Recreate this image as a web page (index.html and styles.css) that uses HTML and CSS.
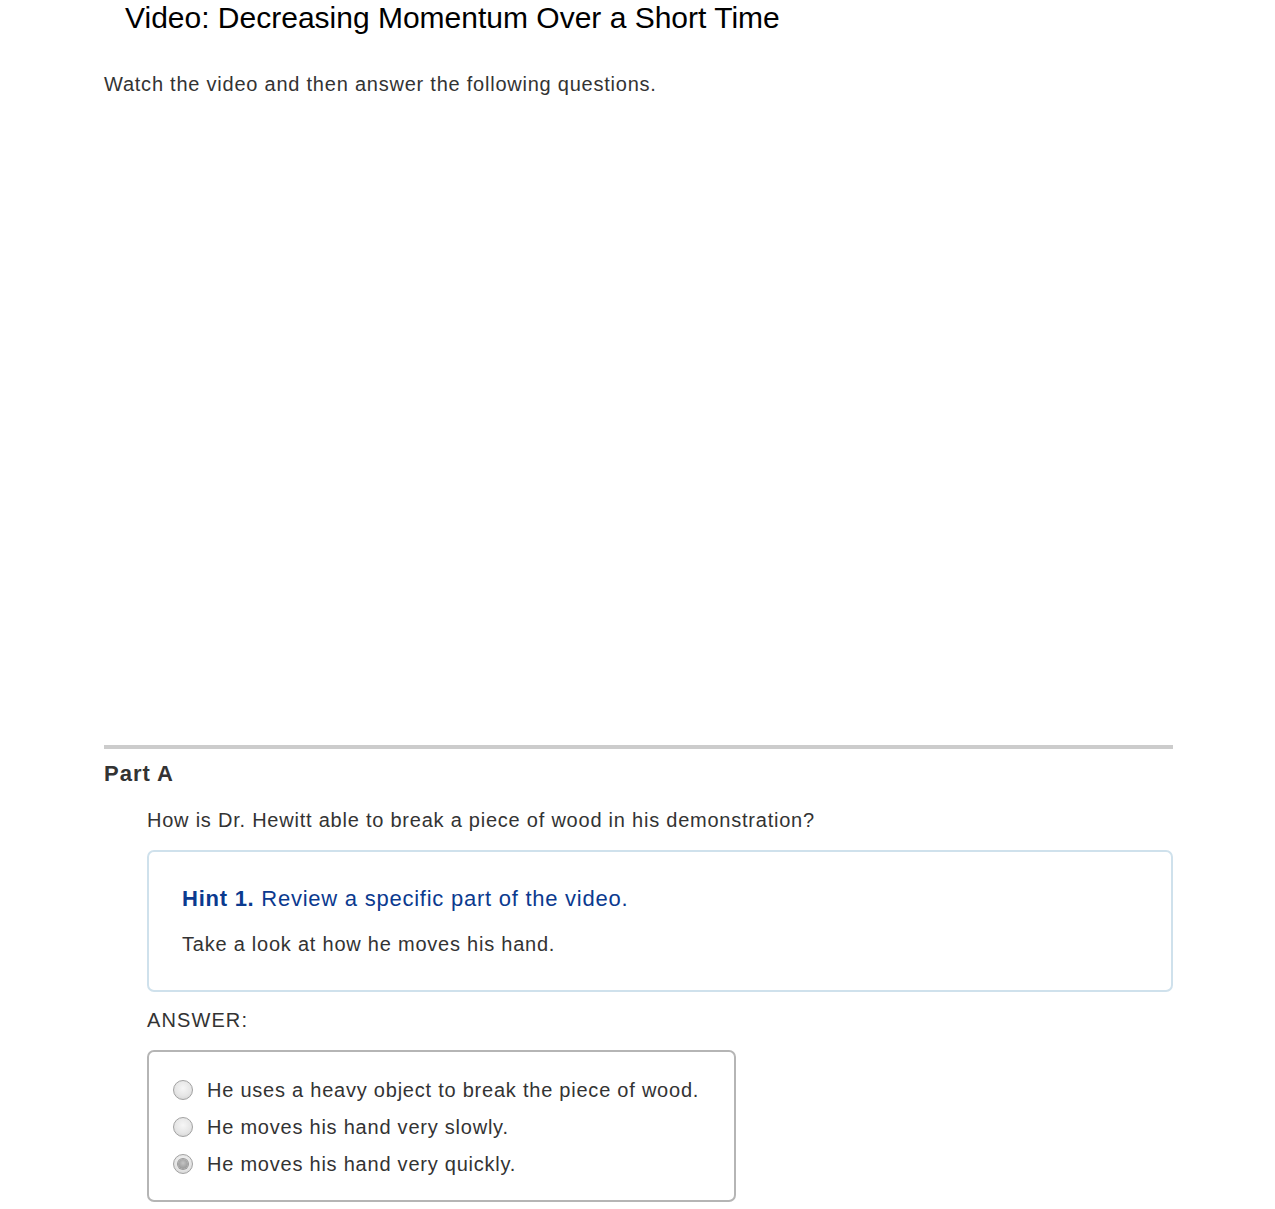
FILE: index.html
```html
<!DOCTYPE html>
<html>
<head>
<meta charset="utf-8">
<link rel="stylesheet" href="styles.css">
</head>
<body>
<div class="page">
  <h1 class="title">Video: Decreasing Momentum Over a Short Time</h1>
  <p class="intro">Watch the video and then answer the following questions.</p>
  <div class="video-space"></div>
  <hr class="rule">
  <h2 class="part">Part A</h2>
  <div class="part-body">
    <p class="question">How is Dr. Hewitt able to break a piece of wood in his demonstration?</p>
    <div class="hint">
      <p class="hint-title"><b>Hint 1.</b> Review a specific part of the video.</p>
      <p class="hint-text">Take a look at how he moves his hand.</p>
    </div>
    <p class="answer-label">ANSWER:</p>
    <div class="answer">
      <div class="option"><span class="radio"></span><span>He uses a heavy object to break the piece of wood.</span></div>
      <div class="option"><span class="radio"></span><span>He moves his hand very slowly.</span></div>
      <div class="option"><span class="radio checked"></span><span>He moves his hand very quickly.</span></div>
    </div>
  </div>
</div>
</body>
</html>
```
FILE: styles.css
```css
html, body {
  margin: 0;
  padding: 0;
  background: #fff;
}
body {
  font-family: "Liberation Sans", Arial, sans-serif;
  color: #333;
  letter-spacing: 0.77px;
}
.page {
  width: 1069px;
  margin-left: 104px;
}
.title {
  margin: 0 0 0 21px;
  padding-top: 1px;
  font-size: 30px;
  font-weight: normal;
  color: #000;
  line-height: 34px;
  letter-spacing: 0;
}
.intro {
  margin: 32px 0 0 0;
  font-size: 20px;
  line-height: 34px;
}
.video-space {
  height: 644px;
}
.rule {
  margin: 0;
  border: none;
  height: 4px;
  background: #ccc;
}
.part {
  margin: 10px 0 0 0;
  font-size: 22px;
  font-weight: bold;
  line-height: 30px;
  letter-spacing: 1px;
}
.part-body {
  margin-left: 43px;
}
.question {
  margin: 16px 0 0 0;
  font-size: 20px;
  line-height: 30px;
}
.hint {
  margin-top: 15px;
  border: 2px solid #cfe1ec;
  border-radius: 7px;
  padding: 32px 33px 31px;
}
.hint-title {
  margin: 0;
  font-size: 22px;
  line-height: 30px;
  color: #0b3a8f;
  letter-spacing: 0.75px;
}
.hint-title b {
  font-weight: bold;
}
.hint-text {
  margin: 15px 0 0 0;
  font-size: 20px;
  line-height: 30px;
}
.answer-label {
  margin: 13px 0 0 0;
  font-size: 20px;
  line-height: 30px;
  letter-spacing: 1.1px;
}
.answer {
  margin-top: 15px;
  width: 561px;
  border: 2px solid #b5b5b5;
  border-radius: 7px;
  padding: 23px 0 21px 24px;
  display: flex;
  flex-direction: column;
  gap: 7px;
}
.option {
  display: flex;
  align-items: center;
  gap: 14px;
  font-size: 20px;
  line-height: 30px;
}
.radio {
  width: 20px;
  height: 20px;
  border-radius: 50%;
  border: 1px solid #a2a2a2;
  background: radial-gradient(circle at 50% 40%, #f6f6f6 0%, #e6e6e6 55%, #cccccc 100%);
  box-sizing: border-box;
  position: relative;
  flex: none;
}
.radio.checked::after {
  content: "";
  position: absolute;
  left: 4px;
  top: 4px;
  width: 10px;
  height: 10px;
  border-radius: 50%;
  background: radial-gradient(circle at 50% 40%, #c4c4c4, #8a8a8a);
  box-shadow: 0 0 0 1px #9a9a9a;
}
```
